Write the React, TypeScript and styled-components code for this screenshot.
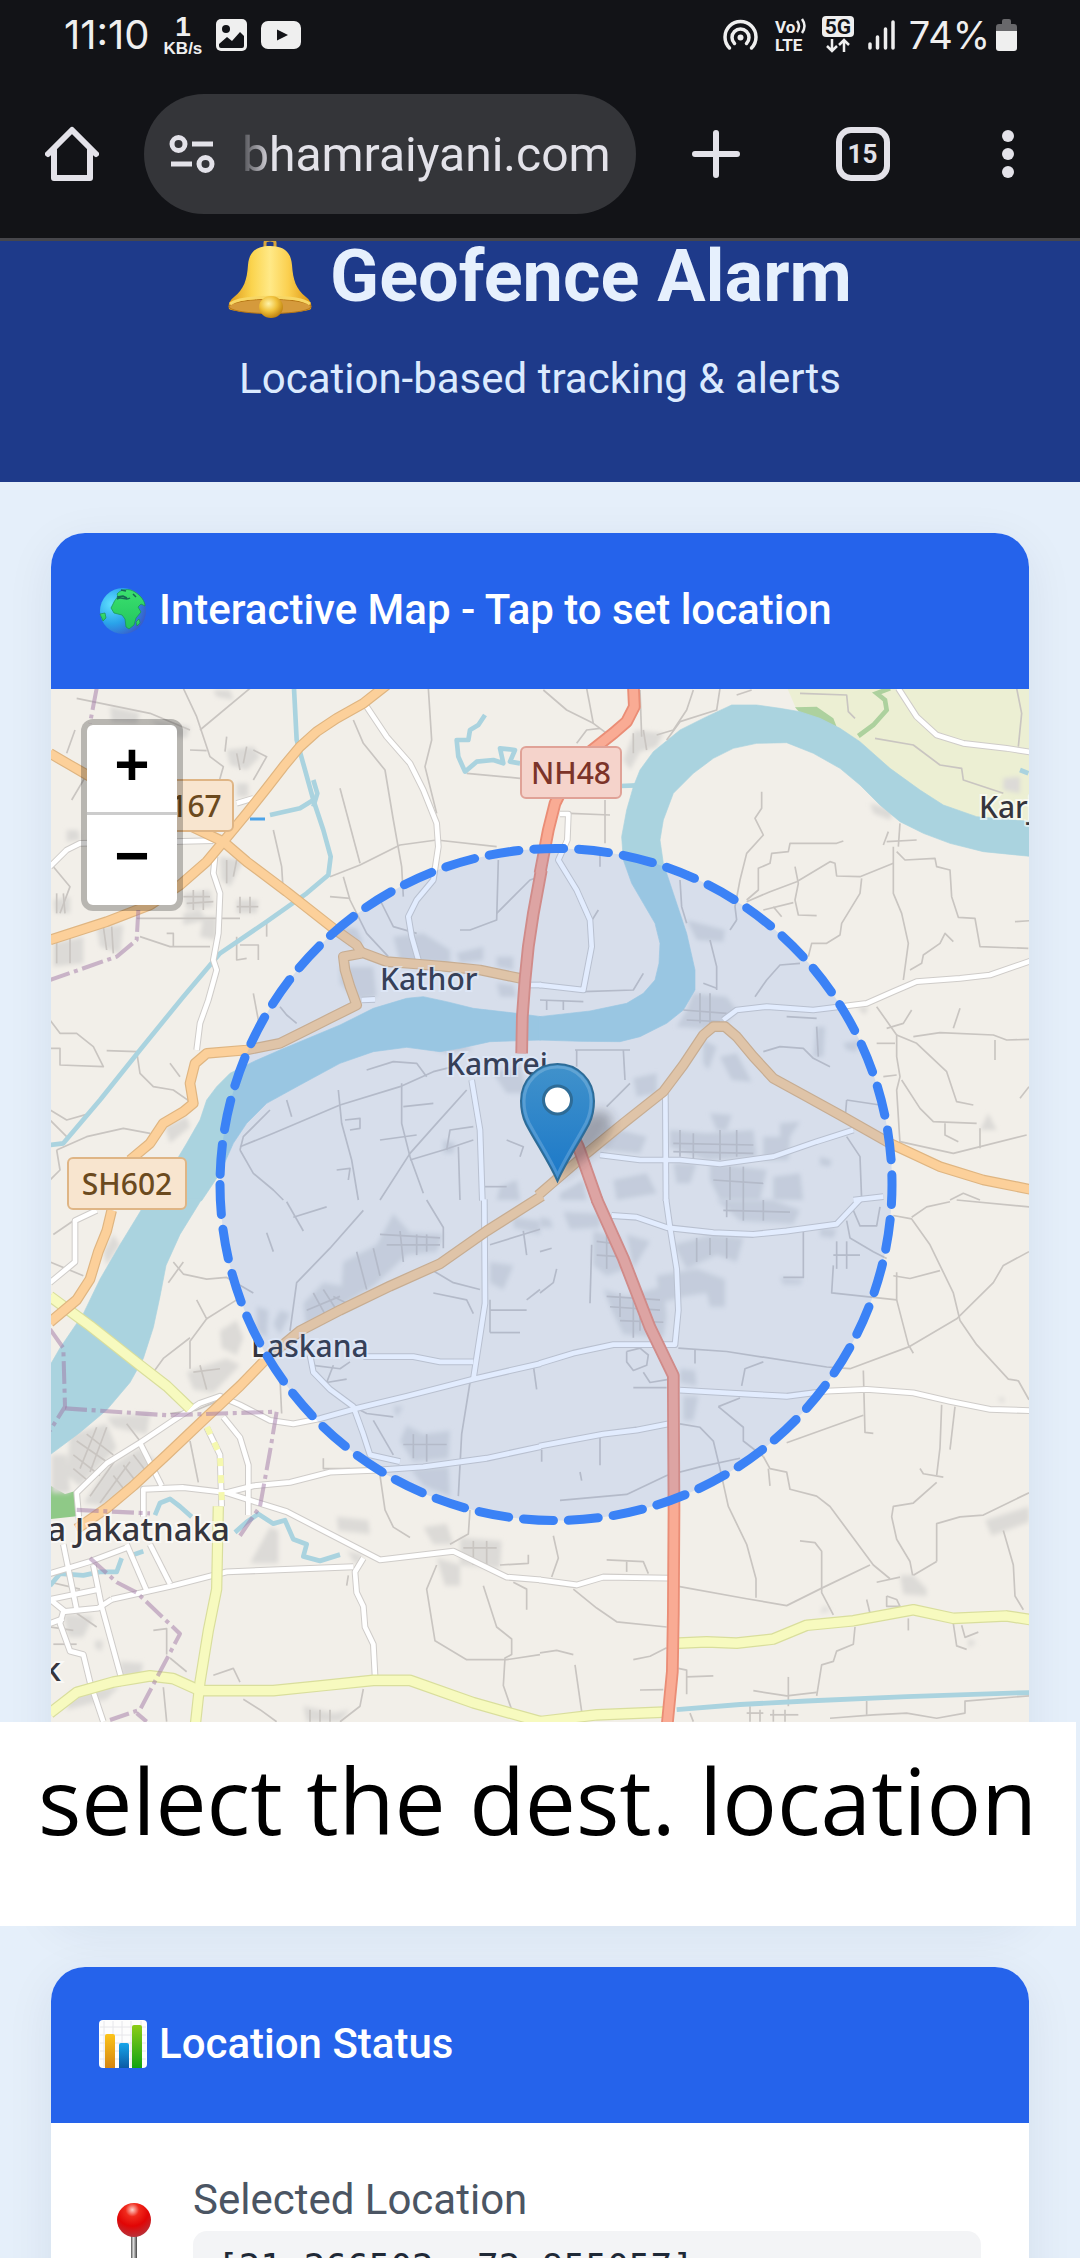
import React from 'react';
import styled, { createGlobalStyle } from 'styled-components';

const GlobalStyle = createGlobalStyle`
  *, *::before, *::after { box-sizing: border-box; }
  body { margin: 0; background: #e5effa; font-family: Roboto, "Liberation Sans", sans-serif; }
  h1, h2, p { margin: 0; }
  svg { display: block; flex: none; }
  button { border: 0; padding: 0; background: none; color: inherit; font: inherit; cursor: pointer; }
`;

/* ---------- Shell ---------- */

const Screen = styled.div`
  display: flex;
  flex-direction: column;
  height: 100vh;
  overflow: hidden;
`;

const Chrome = styled.header`
  flex: none;
  background: #121317;
  color: #e3e2e9;
  border-bottom: 3px solid #46464b;
`;

const StatusBar = styled.div`
  display: flex;
  align-items: center;
  justify-content: space-between;
  height: 70px;
  padding: 0 63px 0 64px;
  color: #efefef;
`;

const StatusGroup = styled.div`
  display: flex;
  align-items: center;
  gap: 14px;
`;

const StatusText = styled.span<{ $size: number }>`
  font: 400 ${(p) => p.$size}px/48px Inter, Roboto, sans-serif;
`;

const Speed = styled.span`
  display: flex;
  flex-direction: column;
  align-items: center;
  font-family: "Liberation Sans", Arial, sans-serif;
  font-weight: 700;
`;

const SpeedValue = styled.span`
  font-size: 28px;
  line-height: 26px;
`;

const SpeedUnit = styled.span`
  font-size: 17px;
  line-height: 17px;
`;

const Power = styled.span`
  display: flex;
  align-items: center;
  gap: 6px;
`;

const Toolbar = styled.nav`
  display: flex;
  align-items: center;
  height: 168px;
`;

const ToolButton = styled.button<{ $wide?: boolean }>`
  display: flex;
  align-items: center;
  justify-content: center;
  flex: none;
  width: ${(p) => (p.$wide ? 147 : 144)}px;
  height: 120px;
`;

const ToolActions = styled.div`
  display: flex;
`;

const AddressBar = styled.label`
  display: flex;
  align-items: center;
  gap: 27px;
  flex: 1;
  min-width: 0;
  height: 120px;
  margin-right: 6px;
  padding: 0 18px 0 25px;
  border-radius: 60px;
  background: #343539;
`;

const AddressInput = styled.input`
  flex: 1;
  min-width: 0;
  height: 64px;
  padding: 0;
  border: 0;
  outline: 0;
  background: none;
  color: #e3e2e9;
  font: 400 48px/60px Roboto, sans-serif;
  mask-image: linear-gradient(to right, rgba(0, 0, 0, 0.15), #000 30px);
`;

const TabCount = styled.span`
  display: flex;
  align-items: center;
  justify-content: center;
  width: 54px;
  height: 54px;
  border: 6px solid #e3e2e9;
  border-radius: 15px;
  font-size: 26px;
  font-weight: 700;
`;

const Page = styled.main`
  flex: 1;
  min-height: 0;
  overflow: hidden;
`;

const Hero = styled.section`
  display: flex;
  flex-direction: column;
  align-items: center;
  overflow: hidden;
  padding-bottom: 73px;
  background: #1e3a8a;
`;

const HeroTitle = styled.h1`
  display: flex;
  align-items: center;
  gap: 18px;
  margin: -6px 0 30px;
  color: #e6f0fd;
  font-size: 72px;
  line-height: 84px;
  font-weight: 700;
`;

const HeroText = styled.p`
  color: #dbeafe;
  font-size: 42px;
  line-height: 60px;
`;

const Section = styled.section`
  position: relative;
  padding: 51px 51px 0;
`;

const Card = styled.div`
  overflow: hidden;
  border-radius: 34px;
  background: #fff;
  box-shadow: 0 12px 48px rgba(15, 35, 80, 0.08);
`;

const CardTitle = styled.h2`
  display: flex;
  align-items: center;
  gap: 12px;
  padding: 53px 48px 55px;
  background: #2563eb;
  color: #fff;
  font-size: 42px;
  line-height: 48px;
  font-weight: 500;
`;

/* ---------- Map ---------- */

const MapFrame = styled.div`
  position: relative;
  overflow: hidden;
  background: #f2efe9;

  > svg { width: 100%; height: auto; }
`;

const ZoomControl = styled.div`
  position: absolute;
  top: 30px;
  left: 30px;
  display: flex;
  flex-direction: column;
  border: 6px solid rgba(0, 0, 0, 0.24);
  border-radius: 12px;
  background: #fff;
  background-clip: padding-box;
`;

const ZoomButton = styled.button`
  width: 90px;
  height: 90px;
  color: #000;
  font: 700 60px/88px "Liberation Mono", monospace;

  &:first-child { border-bottom: 3px solid #ccc; }
`;

const Caption = styled.p`
  position: absolute;
  left: 0;
  right: 4px;
  bottom: -10px;
  height: 204px;
  padding: 22px 20px 0 38px;
  background: #fff;
  color: #000;
  font: 400 91px/112px "Open Sans", "Noto Sans", sans-serif;
  white-space: nowrap;
`;

const MapLabel = styled.text<{ $large?: boolean }>`
  fill: #35353d;
  stroke: rgba(255, 255, 255, 0.6);
  stroke-width: 4px;
  paint-order: stroke;
  font: 500 ${(p) => (p.$large ? 33 : 30)}px "Noto Sans", sans-serif;
`;

const ShieldText = styled.text`
  font: 500 30px "Noto Sans", sans-serif;
  text-anchor: middle;
`;

type Kind = 'track' | 'stream' | 'white' | 'yellow' | 'orange' | 'red' | 'border';

const lineStyle: Record<Kind, { width: number; color: string; casing?: string; edge?: number; dash?: string }> = {
  track: { width: 5, color: '#c9c5c1' },
  stream: { width: 14, color: '#aad3df' },
  white: { width: 14, color: '#ffffff', casing: '#cfccc9', edge: 20 },
  yellow: { width: 27, color: '#f7fabf', casing: '#d9de9c', edge: 34 },
  orange: { width: 25, color: '#fcd09a', casing: '#dfb581', edge: 32 },
  red: { width: 27, color: '#f9ab94', casing: '#ea8d76', edge: 38 },
  border: { width: 12, color: 'rgba(160, 120, 165, 0.5)', dash: '66 14 12 14' },
};

const kinds: Kind[] = ['track', 'stream', 'white', 'yellow', 'orange', 'red', 'border'];

interface Tile {
  place: string;
  river: string;
  blocks: string[];
  lines: Record<Kind, string[]>;
}

const tiles: Tile[] = [
  {
    place: 'translate(40 680) scale(0.33333)',
    river:
      '1504,1010 1430,1000 1300,985 1220,965 1150,950 1100,955 1000,985 900,1035 720,1110 640,1145 570,1180 530,1220 500,1260 480,1320 440,1390 410,1440 360,1500 320,1562 485,1562 540,1480 580,1390 620,1330 680,1270 780,1215 900,1150 1000,1115 1100,1102 1200,1115 1260,1105 1350,1085 1504,1080',
    blocks: [
      '210,80 300,100 290,130 215,125', '330,120 450,140 440,175 390,165', '560,210 640,200 660,230 620,270 570,255',
      '590,310 625,310 625,350 590,350', '80,450 115,450 120,480 80,485', '540,530 610,540 570,620 545,600',
      '40,660 90,650 90,700 45,700', '430,640 510,630 520,680 440,690', '590,660 655,660 650,700 590,700',
      '40,790 130,770 130,850 40,860', '170,740 250,735 240,820 180,800', '490,710 530,710 530,780 480,770',
      '430,700 480,690 500,720 430,735', '890,740 950,745 970,790 920,790', '900,860 1000,860 1010,950 950,960 900,910',
      '1060,770 1150,760 1230,810 1230,850 1080,845', '1250,820 1330,800 1330,840 1260,850', '1370,830 1420,830 1420,870 1370,860',
      '1370,910 1420,915 1430,950 1380,950', '1360,1180 1440,1150 1460,1240 1400,1240', '1210,1380 1245,1390 1240,1420 1210,1420',
      '375,1340 440,1310 450,1340 390,1390', '1380,1520 1430,1500 1440,1560 1370,1560', '1100,1080 1260,1085 1300,1110 1220,1120', '520,30 570,30 580,60 530,50',
    ],
    lines: {
      track: [
        '110,55 330,100 450,150', '430,25 470,110 510,230 550,260 530,330', '630,25 480,150', '105,150 80,220', '160,250 95,360',
        '940,120 970,190 1035,270 1060,420 1085,560 1090,650', '1165,25 1175,180 1155,260 1190,400', '900,325 960,550', '700,450 725,560 730,640',
        '870,590 960,555 1080,495 1190,480 1370,500', '910,590 930,660 980,760 1045,830', '1375,540 1370,720 1290,750 1260,750', '1370,700 1470,600 1500,590',
        '870,650 930,655', '1020,660 1060,740 1130,760', '560,170 555,215', '450,210 500,212', '40,560 90,620 60,700', '300,770 390,800 510,800', '380,760 400,760 400,800', '590,770 590,840 620,835', '600,795 655,795 655,840', '680,730 680,770',
        '640,940 655,1020 650,1060', '720,980 740,1005 770,1030', '30,1020 60,1060 110,1060 160,1100 190,1160 60,1155 60,1105 30,1105',
        '200,1112 290,1115 300,1180 340,1220 400,1230 450,1265', '30,1290 80,1320 150,1300', '30,1320 80,1370', '50,1410 140,1370 250,1345 330,1360', '50,1410 60,1470 30,1500',
        '600,1400 700,1360 900,1275 1080,1220 1180,1175 1240,1160', '600,1410 640,1480 700,1530 730,1560', '740,1260 755,1310', '895,1230 905,1330 935,1440 955,1560',
        '690,1290 610,1370 600,1410', '1085,1210 1085,1330 1110,1430 1150,1540', '1280,1230 1190,1330 1110,1420 1020,1560', '1110,1440 1210,1410 1300,1380', '1255,1400 1260,1560',
        '980,1170 1060,1145 1130,1150 1160,1190', '1090,1280 1180,1270', '915,1320 960,1315 960,1345 930,1350', '1020,1380 1130,1365', '1300,1340 1230,1350 1220,1410', '1320,1520 1400,1520', '1400,1380 1450,1400 1440,1430',
        '390,1150 420,1190', '890,1470 930,1465 925,1500', '1280,280 1440,295', '640,210 680,230 640,300',
        '430,650 510,650', '440,670 520,665', '460,630 460,690', '490,630 490,690', '50,640 50,700', '70,640 75,700', '600,650 600,700', '630,650 630,700', '590,680 655,680',
        '50,780 50,850', '90,770 90,850', '190,740 200,810', '215,740 220,820', '290,715 600,715', '560,540 560,610', '590,540 580,590', '590,220 600,270', '620,200 610,250',
      ],
      stream: [
        '762,25 770,180 795,270 820,360 850,450 872,530 865,585 800,640 680,725 540,820 430,950 300,1110 180,1260 70,1390 30,1395',
        '820,360 780,385 690,405', '820,300 832,340 820,380',
        '1335,105 1315,135 1290,150 1285,180 1250,180 1255,230 1275,275 1310,245 1360,240 1390,250 1380,205 1425,210 1410,245 1440,250',
      ],
      white: [
        '980,80 1040,170 1110,250 1150,330 1190,430 1195,500 1180,600 1130,660 1105,710 1115,770 1135,840',
        '525,530 520,580 540,640 535,760 520,840 530,870 505,960 480,1030 470,1110', '520,482 400,485 120,490 80,510 30,560',
        '1295,1200 1320,1350 1327,1562', '590,370 640,355', '965,960 1005,958', '1465,915 1504,915',
      ],
      yellow: [],
      orange: [
        '1040,15 970,70 890,115 830,155 780,200 730,260 680,325 620,400 550,485 500,545 420,615 330,675 200,725 30,780',
        '30,220 90,255 150,290 350,390 550,485 620,545 740,635 880,745 950,795 965,820',
        '965,820 910,830 915,870 930,920 950,975 870,1015 800,1050 720,1090 620,1110 500,1120 465,1150 450,1210 460,1270 430,1295 370,1330 330,1390 270,1440',
        '960,815 1040,845 1130,852 1220,860 1320,870 1440,895',
      ],
      red: ['1504,570 1480,700 1465,800 1455,900 1447,1010 1445,1120'],
      border: ['170,25 150,130', '295,690 290,780 230,830 30,900'],
    },
  },
  {
    place: 'translate(540 680) scale(0.33333)',
    river:
      '1480,425 1310,410 1210,375 1140,330 1050,265 960,185 900,145 840,115 780,95 720,85 650,75 575,75 500,110 420,150 340,215 300,270 280,320 260,390 245,470 250,540 275,610 310,670 345,730 360,790 357,850 345,900 310,940 260,970 150,993 -2,1010 -2,1080 120,1084 240,1085 300,1070 380,1030 430,990 465,930 465,870 440,760 400,640 370,550 360,480 370,420 400,340 460,280 520,235 580,205 650,190 740,188 820,220 900,265 960,315 1020,375 1080,425 1150,460 1230,490 1330,515 1480,530',
    blocks: [
      '285,150 370,160 350,200 300,215 270,270 250,240', '440,720 555,750 550,785 470,780', '460,940 560,950 590,990 540,1050 410,1040 440,990',
      '490,1080 530,1100 505,1170 490,1150', '540,1130 590,1120 635,1205 575,1200', '280,1195 350,1180 350,1240 290,1250',
      '390,1350 500,1360 640,1350 650,1430 500,1440 390,1400', '720,1330 780,1325 750,1370 745,1440 670,1440 670,1370 720,1370', '830,1040 855,1040 850,1130 820,1130',
      '910,1090 960,1080 950,1115 920,1110', '510,1300 575,1305 560,1350 530,1350', '200,1340 320,1370 300,1420 190,1410', '400,1450 470,1450 450,1510 410,1510', '510,1450 680,1470 660,1560 540,1560 510,1500',
      '1390,295 1440,290 1440,340 1390,330', '990,370 1060,390 1050,420 1000,400', '1345,1300 1370,1350 1320,1350', '220,1500 320,1480 350,1540 230,1560', '700,1490 780,1480 790,1560 700,1560', '60,1540 130,1500 140,1560 60,1560', '840,1430 875,1440 870,1460 840,1455', '950,980 985,980 975,1005',
    ],
    lines: {
      track: [
        '10,30 80,90 160,130 200,160', '140,25 160,130', '460,30 440,90 400,150 350,165', '540,25 530,90 420,125 380,180', '300,30 305,170', '110,190 140,150 180,145', '590,45 635,30',
        '665,335 665,385 645,415 670,465 620,520 600,600 585,680 590,720', '910,483 890,490 750,490 745,515 695,520 690,550 655,565 655,630 620,660', '620,665 690,635 770,605 870,545 885,550 890,588 960,590 1060,550',
        '765,560 775,610 765,660 775,705 830,707', '670,690 760,668', '700,680 725,710', '965,595 960,640 905,730 900,765 860,790 815,790 805,830',
        '1060,500 1060,640 1085,700 1105,790 1090,900', '1070,515 1095,540 1185,535 1190,560 1230,570 1235,650 1255,712 1305,715 1320,800 1465,805', '1080,430 1075,500',
        '1030,495 1045,455', '1040,485 1130,480', '1005,175 1120,195 1200,255 1265,265 1270,300 1390,340', '1430,25 1445,100 1435,200', '1425,725 1470,722', '1110,870 1145,850 1150,825 1200,790 1215,760 1240,785',
        '780,40 920,45 925,95 945,115', '420,600 425,680 440,730', '590,720 570,750', '510,780 530,860 530,930', '490,910 530,925', '780,850 720,855 680,900 645,950',
        '1010,980 1070,1065 1070,1130 1080,1190 1070,1230 1080,1390', '1120,1070 1200,1058 1360,1065 1400,1080 1467,1078', '1365,1080 1365,1140', '1070,1065 1130,1090 1220,1175 1250,1265 1300,1275', '1085,1200 1140,1285 1180,1325 1310,1330',
        '1215,1330 1215,1365 1255,1385', '1320,1345 1320,1405', '1080,1385 1240,1420 1460,1365', '1260,985 1240,1045', '1440,1255 1467,1220', '1030,1190 1070,1185', '1115,990 1090,1030 1040,1045', '1010,1090 1065,1090',
        '670,1115 720,1100 790,1105 820,1135 870,1160', '740,1010 830,1015', '920,1260 1020,1275', '920,1260 915,1320', '130,935 280,930 310,880', '250,1110 255,1200', '105,1110 270,1110', '90,400 210,405', '195,360 195,490', '175,690 150,730', '920,1370 960,1430 965,1560', '110,1110 110,1160', '200,1280 270,1210', '180,520 180,560', '1230,1560 1270,1540 1320,1560',
        '480,940 480,1030', '510,940 510,1040', '430,990 560,1000', '440,1020 540,1025', '420,1350 420,1430', '460,1360 460,1440', '540,1350 540,1440', '590,1350 590,1430', '400,1390 640,1395', '400,1415 640,1420', '570,1460 570,1560', '610,1460 610,1560', '520,1500 670,1510', '830,1040 835,1130', '280,160 280,220', '310,150 320,210', '0,960 130,965', '20,960 20,990', '70,960 70,990',
      ],
      stream: ['240,318 290,316', '1440,270 1465,280'],
      white: [
        '1075,25 1130,110 1190,165 1270,190 1400,205 1480,218', '60,402 85,402 82,480 55,540 110,630 150,720 155,800 130,930 -2,915',
        '550,1020 590,990 680,980 820,990 980,970 1060,935 1130,905 1260,895 1350,885 1480,840', '376,1240 378,1562',
        '180,1425 300,1440 420,1440 540,1452 700,1430 830,1385 940,1350', '940,1560 1030,1550',
      ],
      yellow: [],
      orange: ['-6,1546 140,1420 250,1330 370,1235 430,1155 490,1065 520,1040 555,1040 590,1070 640,1130 700,1195 800,1250 900,1305 1050,1390 1200,1460 1330,1500 1480,1530'],
      red: ['280,15 283,80 260,125 220,160 150,215 90,280 45,370 25,450 0,580', '60,1290 115,1400 172,1562'],
      border: [],
    },
  },
  {
    place: 'translate(40 1200) scale(0.33333 0.34435)',
    river: '320,-2 300,35 240,130 180,230 130,330 60,430 30,480 30,740 120,675 200,610 270,530 310,460 340,370 360,280 378,190 420,100 485,-2',
    blocks: [
      '1010,130 1060,40 1110,95 1210,100 1190,150 1100,160 1000,250 900,310 800,380 790,300 850,240 905,250 910,180', '540,380 590,350 610,400 590,450 545,430', '650,310 685,320 680,400 650,380',
      '440,500 560,460 600,480 520,560 460,550', '90,680 200,650 230,720 120,830 80,800', '200,780 300,720 350,760 200,890 130,880', '35,740 80,740 90,850 35,850', '220,100 240,130 200,190 190,150',
      '1100,655 1150,680 1230,670 1225,750 1120,760 1080,700', '1110,780 1225,775 1230,860 1150,830', '890,920 985,930 990,970 895,960', '1150,950 1220,940 1240,1000 1180,1000', '1260,980 1385,990 1380,1070 1260,1060',
      '1190,1040 1260,1060 1260,1120 1215,1120', '690,950 715,960 715,1055 630,1055', '70,1200 160,1210 130,1270 85,1270', '240,1340 310,1345 300,1390 245,1390', '90,1430 240,1410 200,1450 80,1480', '1350,180 1420,190 1390,260 1350,240',
      '1420,50 1500,60 1500,100 1420,80', '790,1470 880,1490 930,1480 900,1515 800,1515', '200,630 330,620 320,680 220,660', '1060,600 1090,600 1070,630', '720,320 750,330 720,390 700,360', '920,1020 970,1030 950,1060', '165,1280 190,1280 185,1310 165,1300',
    ],
    lines: {
      track: [
        '400,180 430,215 500,230 560,225 640,270', '385,240 430,180', '470,290 500,345 450,410 450,490', '590,290 500,345', '450,400 370,460 340,500', '760,50 860,20', '740,5 790,90', '680,95 700,150', '970,30 870,140 770,240 750,380',
        '1160,0 1210,80 1210,140', '1350,130 1500,85', '1290,530 1265,680 1255,860', '720,520 725,620', '450,700 475,820', '1020,800 1035,900 1060,950 1110,980', '1290,900 1285,970 1230,1000',
        '1190,1060 1160,1130 1185,1280 1280,1335 1400,1335 1500,1320', '1330,1120 1370,1240 1415,1275 1415,1320 1395,1330 1390,1410 1415,1480', '1380,1060 1465,1055 1465,1030', '1420,1110 1460,1130 1460,1190', '925,1090 920,1120',
        '520,1380 580,1360 600,1400', '610,1450 660,1480 710,1515', '970,1420 960,1470 900,1515', '370,1415 380,1515', '340,1250 380,1245 380,1320', '390,1330 440,1370', '850,750 850,780 930,780', '1350,320 1460,320', '1350,385 1440,385', '1350,290 1350,385',
        '1480,480 1490,550', '960,610 980,620 1060,630', '1170,200 1240,240 1320,260', '1180,270 1280,290 1300,330', '820,480 900,490 930,470', '830,500 860,530 920,520', '860,530 880,480', '40,100 100,60', '30,180 130,220', '1450,90 1460,160', '1500,260 1460,290', '1000,640 1060,740', '390,620 470,610 590,560', '260,650 300,700',
        '110,700 200,760', '140,680 220,740', '150,860 230,750', '180,880 270,760', '1020,100 1200,110', '1040,130 1200,130', '1080,90 1090,180', '950,150 980,260',
        '100,740 180,800', '100,780 150,820', '170,660 120,780', '200,660 150,790', '220,800 260,850', '250,770 290,820', '280,740 320,790', '820,270 860,340', '850,260 890,320', '880,280 920,300', '800,320 900,280', '1000,140 1020,220', '1130,100 1130,160', '1160,100 1160,150',
        '30,1110 120,1130', '30,1240 100,1250', '40,1290 110,1290', '110,1200 170,1240', '1270,1010 1370,1010', '1300,990 1300,1060', '1340,990 1340,1070', '1120,680 1120,750', '1160,680 1160,760', '1090,710 1220,710', '810,1480 810,1515', '840,1480 840,1515', '870,1480 870,1515', '460,500 540,490', '480,480 500,550',
      ],
      stream: ['345,915 360,880 390,868 420,890 455,920', '585,965 620,935 655,912 700,940 735,930 760,985 800,1000 790,1035 840,1048 900,1030', '30,1120 60,1085 130,1090 180,1080 230,1080 245,1040', '280,1030 310,1020'],
      white: [
        '1502,475 1300,520 1100,570 950,605 840,635 760,650 690,640 600,595 540,570 480,590 400,640 300,705 200,765 110,850 120,960', '810,450 820,500 870,550 940,600 970,680 990,740 1080,760',
        '1502,716 1340,750 1150,775 1000,785 870,790 750,820 640,830 560,850 430,835 310,840 310,920', '560,850 640,875 740,905 840,955 1020,1045 1240,1020 1400,1095 1502,1103', '550,630 600,690 625,770 625,915', '300,705 365,830',
        '30,1160 180,1130', '215,1160 400,1120 560,1080 940,1065', '970,1040 945,1080 950,1140 970,1180 975,1240 1000,1290 1005,1380', '70,1000 110,1190', '30,1085 150,1050 260,1010', '160,1060 185,1180 250,1410', '30,1160 75,1195 175,1185 215,1160',
        '260,1000 320,1135', '330,1000 390,1115', '70,1195 60,1230 90,1310 130,1320 150,1400 190,1515', '30,1230 70,1215', '170,30 105,60 105,180 30,240', '970,455 1120,455 1200,470 1300,470', '1333,-2 1335,300 1300,520', '500,660 540,740 545,890',
      ],
      yellow: ['30,280 150,365 300,480 380,540 450,605', '535,890 530,1130 505,1250 480,1400 462,1560', '30,1490 110,1430 220,1400 330,1382 400,1390 480,1425 700,1425 850,1410 1000,1395 1110,1395 1300,1460 1502,1515'],
      orange: ['215,30 200,90 175,150 150,230 110,290 30,355', '1506,-12 1340,90 1200,185 1050,250 900,320 780,380 680,460 600,540 500,630 380,740 280,830 200,895 110,955'],
      red: [],
      border: ['30,375 70,430 75,600 30,670', '75,605 380,625 710,615 690,730 660,890 600,975', '110,900 330,910', '150,1040 230,1110 290,1140 420,1260 300,1480 210,1510', '290,1490 320,1515'],
    },
  },
  {
    place: 'translate(540 1200) scale(0.33333 0.34435)',
    river: '',
    blocks: [
      '0,50 30,55 40,80 0,80', '70,35 180,40 180,80 90,85', '160,90 240,110 260,200 200,220 160,190', '190,260 260,280 370,250 380,340 370,400 250,390 220,330', '350,220 470,200 555,230 555,310 510,310 500,270 430,280 360,300', '400,130 520,100 610,110 590,180 530,160 440,200',
      '530,0 700,0 780,30 760,70 600,60', '430,570 475,570 460,640 430,640', '840,80 890,85 880,110 840,105', '1335,930 1467,890 1467,935 1355,975', '1080,1090 1120,1090 1160,1130 1160,1150 1090,1145', '720,225 790,230 780,245 730,245', '420,490 465,495 470,540 420,530', '1370,575 1395,575 1390,590', '850,1180 875,1190 840,1200', '1285,1275 1310,1285 1285,1300', '260,100 330,120 280,200',
    ],
    lines: {
      track: [
        '415,430 560,440 860,485 930,490 1110,425 1250,345 1360,240 1390,190 1467,150', '1060,45 1115,55 1170,130 1240,270 1260,350 1310,420 1405,520 1435,525 1467,580', '1115,50 1160,20 1230,5', '1250,0 1467,20', '1060,220 1110,228 1200,205',
        '790,90 790,225 730,225', '880,190 875,270 1070,290 1070,210', '1070,290 1105,420 1120,445', '970,495 975,675 1000,678', '970,625 740,705', '1205,595 1200,720 1190,800', '1245,600 1230,725', '1140,780 1150,795 1210,805',
        '1190,820 1120,880 1060,890 1055,920 1070,985 1110,1050 1118,1090', '670,745 690,780 740,790 750,840 830,860 870,890 1000,1060 1050,1100', '685,780 690,830', '420,650 480,660 520,700 540,780 565,890 620,1000 648,1100 648,1155',
        '60,872 260,855 380,800 480,775 600,750', '780,990 825,995 845,1020 845,1140 880,1205', '415,1122 620,1158 740,1178 850,1125 990,1060', '100,1130 170,1185 230,1225 380,1240', '40,975 55,1040 35,1095', '200,1045 310,1050 325,1085', '260,1050 260,1080',
        '280,1335 330,1325 380,1300', '0,1315 50,1308 100,1320', '105,1350 125,1485', '300,1423 370,1422', '415,1360 440,1365 440,1435', '440,1385 520,1382', '1190,1050 1190,940 1260,920 1330,915 1467,850', '1120,1090 1190,1050',
        '1390,960 1420,1060 1425,1150 1450,1190', '945,1240 940,1290 890,1310 880,1340 845,1350 830,1440', '640,1425 740,1440 830,1430', '745,1385 745,1470', '1105,1215 1105,1250', '1240,1230 1250,1295 1280,1305', '1265,1235 1275,1270 1315,1255',
        '870,1505 1000,1495 1100,1490 1190,1505 1275,1490 1275,1455 1467,1440', '980,1455 980,1495', '630,1470 630,1515', '660,1480 660,1515', '620,1490 670,1490', '700,1480 700,1515', '735,1480 735,1515', '690,1495 775,1495', '450,1490 460,1515',
        '535,600 600,575', '535,600 610,660 610,700 670,745', '605,540 615,490 670,470', '280,545 380,545', '465,435 465,475', '180,690 180,770', '120,790 125,815', '155,130 150,300', '50,200 40,240 0,270', '0,150 35,140', '5,725 5,760', '1010,1110 1080,1095', '980,1160 990,1200', '1040,1150 1070,1160 1080,1180 1040,1180 1040,1150',
        '920,60 930,110 1000,150 1040,170', '890,120 890,200', '920,120 920,200', '880,160 960,160', '940,30 960,75 1010,75 1020,20',
        '260,440 300,430 325,450 320,480 280,495 260,470 260,440', '310,500 330,530 390,520', '200,280 360,290', '210,310 360,320', '240,270 240,340', '280,260 280,400', '330,330 360,400',
        '560,0 560,50', '610,0 610,60', '670,0 670,60', '550,30 750,35', '170,120 250,130', '170,160 250,165', '200,100 200,200', '470,110 470,180', '510,110 510,160', '560,110 560,170', '300,300 300,380', '240,350 370,355',
      ],
      stream: ['410,1480 600,1465 800,1455 1100,1442 1480,1430'],
      white: [
        '378,-2 390,80 410,200 415,320 405,420 220,420 100,445 -2,475', '215,45 290,50 380,80 520,95 640,100 740,90 890,70 960,-2', '420,552 560,560 740,570 860,555 980,550 1120,560 1230,585 1350,608 1480,612',
        '385,650 290,668 190,680 -2,715', '385,1098 190,1095 110,1118 -2,1103',
      ],
      yellow: ['-2,1515 170,1495 370,1487', '415,1287 500,1283 590,1287 700,1275 800,1235 940,1222 1120,1190 1240,1215 1400,1208 1480,1220'],
      orange: [],
      red: ['170,-2 250,170 330,370 400,510 400,560 402,900 400,1200 397,1370 378,1560'],
      border: [],
    },
  },
];

function TileLayer({ kind }: { kind: Kind }) {
  const s = lineStyle[kind];
  return (
    <g fill="none" strokeLinejoin="round">
      {s.casing &&
        tiles.map((t) => (
          <g key={t.place} transform={t.place} stroke={s.casing} strokeWidth={s.edge}>
            {t.lines[kind].map((p) => <polyline key={p} points={p} />)}
          </g>
        ))}
      {tiles.map((t) => (
        <g key={t.place} transform={t.place} stroke={s.color} strokeWidth={s.width} strokeDasharray={s.dash}>
          {t.lines[kind].map((p) => <polyline key={p} points={p} />)}
        </g>
      ))}
    </g>
  );
}

function Shield({ x, y, w, label, red }: { x: number; y: number; w: number; label: string; red?: boolean }) {
  return (
    <g>
      <rect x={x} y={y} width={w} height="51" rx="5" fill={red ? '#f5d3cb' : '#f8e5cf'} stroke={red ? '#e0a297' : '#dfb585'} strokeWidth="2" />
      <ShieldText x={x + w / 2} y={y + 37} fill={red ? '#7c3329' : '#6b4a1e'}>{label}</ShieldText>
    </g>
  );
}

function MapDrawing() {
  return (
    <svg viewBox="51 689 978 1227" role="img" aria-label="Map around Kamrej with the alarm radius">
      <defs>
        <linearGradient id="marker" x1="0" y1="0" x2="0" y2="1">
          <stop offset="0" stopColor="#4192cb" />
          <stop offset="1" stopColor="#1b78c8" />
        </linearGradient>
        <filter id="soft" x="-50%" y="-50%" width="200%" height="200%">
          <feGaussianBlur stdDeviation="6" />
        </filter>
        <filter id="town" x="-5%" y="-5%" width="110%" height="110%">
          <feGaussianBlur stdDeviation="7" />
        </filter>
      </defs>
      <rect x="51" y="689" width="978" height="1227" fill="#f2efe9" />
      <g transform={tiles[1].place}>
        <polygon points="740,20 1480,20 1480,430 1310,415 1210,380 1050,275 900,150 770,90" fill="#ecefd3" />
        <polygon points="765,82 830,80 880,115 890,140 835,118 780,98" fill="#add19e" />
        <polyline points="955,168 1000,135 1040,90 1035,60 1010,40 1050,25" fill="none" stroke="#add19e" strokeWidth="14" />
      </g>
      <polygon points="51,1486 65,1494 79,1490 79,1516 51,1519" fill="#8fc987" />
      {tiles.map((t) => (
        <g key={t.place} transform={t.place}>
          <g fill="#dcdad7" filter="url(#town)">
            {t.blocks.map((p) => <polygon key={p} points={p} />)}
          </g>
          {t.river && <polygon points={t.river} fill="#aad3df" stroke="#aad3df" strokeWidth="2" strokeLinejoin="round" />}
        </g>
      ))}
      {kinds.map((k) => <TileLayer key={k} kind={k} />)}
      <polyline points="207,1427 220,1455 222,1506" fill="none" stroke="#f5f8ae" strokeWidth="6" strokeDasharray="8 9" />
      <path d="M250 819h15" stroke="#4da3e8" strokeWidth="3" />

      <Shield x={120} y={780} w={113} label="SH167" />
      <Shield x={521} y={747} w={100} label="NH48" red />
      <Shield x={68} y={1158} w={118} label="SH602" />
      <MapLabel x="380" y="990">Kathor</MapLabel>
      <MapLabel x="446" y="1075">Kamrej</MapLabel>
      <MapLabel x="251" y="1357">Laskana</MapLabel>
      <MapLabel x="230" y="1541" textAnchor="end" $large>a Jakatnaka</MapLabel>
      <MapLabel x="61" y="1681" textAnchor="end" $large>k</MapLabel>
      <MapLabel x="979" y="818">Karj</MapLabel>

      <path
        d="M220 1184.500a336 336 0 1 0 672 0a336 336 0 1 0 -672 0"
        fill="#3b82f6"
        fillOpacity="0.15"
        stroke="#3b82f6"
        strokeWidth="9"
        strokeLinecap="round"
        strokeDasharray="30 15"
      />

      <path d="M558 1180L572 1140Q584 1106 606 1112Q620 1120 600 1146Z" fill="#20242c" opacity="0.32" filter="url(#soft)" />
      <path
        d="M557.500 1181C549 1162 536 1143 526 1124C522 1116 521 1109 521 1101C521 1080 537 1064 557.500 1064S594 1080 594 1101C594 1109 593 1116 589 1124C579 1143 566 1162 557.500 1181Z"
        fill="url(#marker)"
        stroke="#2e6c97"
        strokeWidth="2"
      />
      <path
        d="M557.500 1175C550 1158 538 1140 529 1123C525 1115 524 1109 524 1101C524 1082 539 1067 557.500 1067S591 1082 591 1101C591 1109 590 1115 586 1123C577 1140 565 1158 557.500 1175Z"
        fill="none"
        stroke="#fff"
        strokeOpacity="0.18"
        strokeWidth="3"
      />
      <circle cx="557.500" cy="1100" r="14" fill="#fff" stroke="#2e6c97" strokeWidth="3" />
    </svg>
  );
}

/* ---------- Pictures ---------- */

function Bell() {
  return (
    <svg width="84" height="84" viewBox="0 0 84 84" aria-hidden="true">
      <defs>
        <linearGradient id="bell" x1="0" x2="1">
          <stop offset="0" stopColor="#dd9a1c" /><stop offset=".28" stopColor="#fbd44e" />
          <stop offset=".5" stopColor="#ffe987" /><stop offset=".72" stopColor="#fbd050" /><stop offset="1" stopColor="#dc9512" />
        </linearGradient>
        <radialGradient id="clapper" cx=".4" cy=".35" r=".7">
          <stop offset="0" stopColor="#fff3a8" /><stop offset=".5" stopColor="#f0c13a" /><stop offset="1" stopColor="#b97a0a" />
        </radialGradient>
      </defs>
      <path d="M37 13V8q0-3 5-3t5 3v5" fill="none" stroke="#d9a63a" strokeWidth="3" />
      <path d="M42 11C27 11 21 18 20 30C19 45 16 54 6 62C1 66 0 70 1 74C8 79 76 79 83 74C84 70 83 66 78 62C68 54 65 45 64 30C63 18 57 11 42 11Z" fill="url(#bell)" />
      <path d="M1 71C10 62 74 62 83 71C84 81 0 81 1 71Z" fill="#d59a3c" stroke="#b57413" strokeWidth="1" />
      <path d="M2 69C14 60 70 60 82 69" fill="none" stroke="#f7d766" strokeWidth="3" />
      <ellipse cx="43" cy="72" rx="12" ry="11" fill="url(#clapper)" />
    </svg>
  );
}

function Globe() {
  return (
    <svg width="48" height="48" viewBox="0 0 48 48" aria-hidden="true">
      <defs>
        <radialGradient id="sea" cx=".25" cy=".35" r=".85">
          <stop offset="0" stopColor="#5fe0ff" /><stop offset=".5" stopColor="#2aa3ea" /><stop offset="1" stopColor="#3b4fc4" />
        </radialGradient>
        <linearGradient id="land" x1="0" y1="0" x2="0" y2="1">
          <stop offset="0" stopColor="#3be06e" /><stop offset="1" stopColor="#22c55e" />
        </linearGradient>
      </defs>
      <circle cx="24" cy="25" r="23" fill="url(#sea)" />
      <g fill="url(#land)" stroke="#1a9150" strokeWidth=".7">
        <path d="M15 16C17 12 20 11 18 8C22 3 30 2 36 6C42 10 46 15 46 20L42 18L39 21L42 26L37 32L35 39L30 43L27 41L26 33L23 29L15 27L12 22Z" />
        <path d="M1 28L6 27L7 32L4 35Z" />
        <path d="M37 36l3-3 1 4-3 3z" />
      </g>
      <path d="M18 13c5-3 9 2 13-1M18 11l6-1 4 2M22 4l5 1M34 8l3 3" fill="none" stroke="#166a52" strokeWidth="1.500" />
    </svg>
  );
}

function BarChart() {
  return (
    <svg width="48" height="48" viewBox="0 0 48 48" aria-hidden="true">
      <defs>
        <linearGradient id="b1" x1="0" y1="0" x2="0" y2="1"><stop stopColor="#fcc419" /><stop offset="1" stopColor="#d58512" /></linearGradient>
        <linearGradient id="b2" x1="0" y1="0" x2="0" y2="1"><stop stopColor="#16a5ea" /><stop offset="1" stopColor="#0b5aa5" /></linearGradient>
        <linearGradient id="b3" x1="0" y1="0" x2="0" y2="1"><stop stopColor="#8ccc18" /><stop offset="1" stopColor="#12a312" /></linearGradient>
      </defs>
      <rect width="48" height="48" rx="4" fill="#fdfdfd" />
      <path d="M5 1v46M14 1v46M23 1v46M32 1v46M42 1v46M1 7h46M1 15h46M1 23h46M1 31h46M1 39h46" stroke="#e6e6ea" strokeWidth="1" />
      <path d="M6 48V16q0-2 2-2h6q2 0 2 2v32z" fill="url(#b1)" />
      <path d="M20 48V25q0-2 2-2h6q2 0 2 2v23z" fill="url(#b2)" />
      <path d="M33 48V7q0-2 2-2h6q2 0 2 2v41z" fill="url(#b3)" />
    </svg>
  );
}

function Pushpin() {
  return (
    <svg width="70" height="66" viewBox="0 0 70 66" aria-hidden="true">
      <defs>
        <radialGradient id="pin" cx=".45" cy=".2" r=".8">
          <stop offset="0" stopColor="#ffd0c8" /><stop offset=".25" stopColor="#f02a1c" /><stop offset=".6" stopColor="#e10505" /><stop offset="1" stopColor="#b8323a" />
        </radialGradient>
        <linearGradient id="needle"><stop stopColor="#555" /><stop offset=".4" stopColor="#ddd" /><stop offset="1" stopColor="#444" /></linearGradient>
      </defs>
      <path d="M32 30h6v32l-3 4-3-4z" fill="url(#needle)" />
      <circle cx="35" cy="17" r="17" fill="url(#pin)" />
    </svg>
  );
}

function HomeIcon() {
  return (
    <svg width="54" height="56" viewBox="0 0 54 56" fill="none" stroke="#e3e2e9" strokeWidth="6" strokeLinejoin="round" strokeLinecap="round" aria-hidden="true">
      <path d="M3 28L27 4L51 28" />
      <path d="M9 24V52H45V24" />
    </svg>
  );
}

function TuneIcon() {
  return (
    <svg width="46" height="40" viewBox="0 0 46 40" fill="none" stroke="#e3e2e9" strokeWidth="5" aria-hidden="true">
      <circle cx="9.500" cy="10" r="6.500" /><path d="M23 10h21M2 30h21" /><circle cx="36.500" cy="30" r="6.500" />
    </svg>
  );
}

function PictureIcon() {
  return (
    <svg width="31" height="32" viewBox="0 0 31 32" aria-hidden="true">
      <rect width="31" height="32" rx="5" fill="#efefef" />
      <circle cx="10" cy="10" r="4" fill="#121317" />
      <path d="M3 25l8-7 5 4 8-9 4 4v10q0 2-2 2H5q-2 0-2-2z" fill="#121317" />
    </svg>
  );
}

function PlayIcon() {
  return (
    <svg width="40" height="28" viewBox="0 0 40 28" aria-hidden="true">
      <rect width="40" height="28" rx="7" fill="#efefef" />
      <path d="M16 8.500v11l11-5.500z" fill="#121317" />
    </svg>
  );
}

function HotspotIcon() {
  return (
    <svg width="35" height="32" viewBox="0 0 35 32" fill="none" stroke="#efefef" strokeWidth="3.500" strokeLinecap="round" aria-hidden="true">
      <path d="M6.500 29a15.500 15.500 0 1 1 22 0" />
      <path d="M11.500 24.500a8.500 8.500 0 1 1 12 0" />
      <circle cx="17.500" cy="18.500" r="3" fill="#efefef" stroke="none" />
    </svg>
  );
}

const TinyText = styled.text`
  font-family: Roboto, sans-serif;
  font-weight: 700;
`;

function VolteIcon() {
  return (
    <svg width="36" height="36" viewBox="-3 0 36 36" fill="#efefef" aria-hidden="true">
      <TinyText x="0" y="16" fontSize="17">Vo</TinyText>
      <path d="M22 4q4 5 0 11M27 2q5 7 0 14" fill="none" stroke="#efefef" strokeWidth="2.500" />
      <TinyText x="0" y="34" fontSize="17">LTE</TinyText>
    </svg>
  );
}

function FiveGIcon() {
  return (
    <svg width="32" height="38" viewBox="0 0 32 38" aria-hidden="true">
      <rect width="32" height="21" rx="4" fill="#efefef" />
      <TinyText x="16" y="18" fontSize="21" textAnchor="middle" fill="#121317">5G</TinyText>
      <path d="M10 23v12M5 30l5 5 5-5M22 36V24M17 29l5-5 5 5" fill="none" stroke="#efefef" strokeWidth="2.500" />
    </svg>
  );
}

function SignalIcon() {
  return (
    <svg width="27" height="30" viewBox="0 0 27 30" stroke="#efefef" strokeWidth="3.500" strokeLinecap="round" aria-hidden="true">
      <path d="M2 24v4M9.500 17v11M17.500 9v19M25 2v26" />
    </svg>
  );
}

function BatteryIcon() {
  return (
    <svg width="21" height="32" viewBox="0 0 21 32" aria-hidden="true">
      <path d="M0 13V8q0-3 3-3h3V2q0-2 2-2h5q2 0 2 2v3h3q3 0 3 3v5z" fill="#68686b" />
      <path d="M0 12h21v17q0 3-3 3H3q-3 0-3-3z" fill="#efefef" />
    </svg>
  );
}

/* ---------- Status card ---------- */

const StatusRow = styled.div`
  display: flex;
  align-items: center;
  gap: 24px;
  padding: 46px 48px 48px;
`;

const StatusInfo = styled.div`
  flex: 1;
  min-width: 0;
`;

const StatusLabel = styled.p`
  color: #4b5563;
  font-size: 42px;
  line-height: 62px;
`;

const Coordinates = styled.p`
  padding: 12px 24px;
  border-radius: 14px;
  background: #f3f4f6;
  color: #1f2937;
  font: 400 36px/48px "DejaVu Sans Mono", monospace;
`;

export default function App() {
  return (
    <Screen>
      <GlobalStyle />
      <Chrome>
        <StatusBar>
          <StatusGroup>
            <StatusText $size={40}>11:10</StatusText>
            <Speed>
              <SpeedValue>1</SpeedValue>
              <SpeedUnit>KB/s</SpeedUnit>
            </Speed>
            <PictureIcon />
            <PlayIcon />
          </StatusGroup>
          <StatusGroup>
            <HotspotIcon />
            <VolteIcon />
            <FiveGIcon />
            <SignalIcon />
            <Power>
              <StatusText $size={38}>74%</StatusText>
              <BatteryIcon />
            </Power>
          </StatusGroup>
        </StatusBar>
        <Toolbar>
          <ToolButton aria-label="Home"><HomeIcon /></ToolButton>
          <AddressBar>
            <TuneIcon />
            <AddressInput readOnly aria-label="Address" value="bhamraiyani.com" />
          </AddressBar>
          <ToolActions>
            <ToolButton $wide aria-label="New tab">
              <svg width="48" height="48" viewBox="0 0 48 48" stroke="#e3e2e9" strokeWidth="6" strokeLinecap="round" aria-hidden="true">
                <path d="M24 3v42M3 24h42" />
              </svg>
            </ToolButton>
            <ToolButton $wide aria-label="Open tabs"><TabCount>15</TabCount></ToolButton>
            <ToolButton aria-label="Menu">
              <svg width="12" height="48" viewBox="0 0 12 48" fill="#e3e2e9" aria-hidden="true">
                <circle cx="6" cy="6" r="6" /><circle cx="6" cy="24" r="6" /><circle cx="6" cy="42" r="6" />
              </svg>
            </ToolButton>
          </ToolActions>
        </Toolbar>
      </Chrome>

      <Page>
        <Hero>
          <HeroTitle><Bell />Geofence Alarm</HeroTitle>
          <HeroText>Location-based tracking &amp; alerts</HeroText>
        </Hero>

        <Section>
          <Card>
            <CardTitle><Globe />Interactive Map - Tap to set location</CardTitle>
            <MapFrame>
              <MapDrawing />
              <ZoomControl>
                <ZoomButton aria-label="Zoom in">+</ZoomButton>
                <ZoomButton aria-label="Zoom out">−</ZoomButton>
              </ZoomControl>
            </MapFrame>
          </Card>
          <Caption>select the dest. location</Caption>
        </Section>

        <Section>
          <Card>
            <CardTitle><BarChart />Location Status</CardTitle>
            <StatusRow>
              <Pushpin />
              <StatusInfo>
                <StatusLabel>Selected Location</StatusLabel>
                <Coordinates>[21.266502, 72.955057]</Coordinates>
              </StatusInfo>
            </StatusRow>
          </Card>
        </Section>
      </Page>
    </Screen>
  );
}
